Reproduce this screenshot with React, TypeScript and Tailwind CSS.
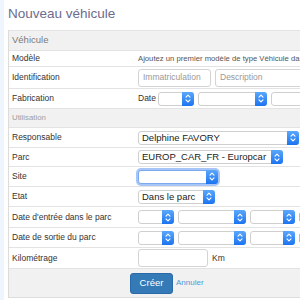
import React from 'react';

const FONT = { fontFamily: '"Liberation Sans", Arial, sans-serif' };

// Mac-style select with the blue up/down button on the right
const Select: React.FC<{ w: number; text?: string; focus?: boolean }> = ({ w, text, focus }) => (
  <div
    className={`flex h-[14px] shrink-0 items-stretch rounded-[3px] border bg-white ${
      focus ? 'border-[#7aa9f0] shadow-[0_0_0_2px_rgba(96,150,240,0.55)]' : 'border-[#cfcfcf]'
    }`}
    style={{ width: w }}
  >
    <div className="flex-1 overflow-hidden whitespace-nowrap pl-[3px] text-[9.5px] leading-[12px] text-[#222]">
      {text}
    </div>
    <div className="-my-px -mr-px flex w-[12px] items-center justify-center rounded-r-[3px] bg-gradient-to-b from-[#5aa7fb] to-[#1a73ef]">
      <svg width="6" height="9" viewBox="0 0 6 9" fill="none" stroke="white" strokeWidth="1.1" strokeLinecap="round" strokeLinejoin="round">
        <path d="M1 3.2 L3 1.2 L5 3.2" />
        <path d="M1 5.8 L3 7.8 L5 5.8" />
      </svg>
    </div>
  </div>
);

const Row: React.FC<{ label: string; h: number; children?: React.ReactNode }> = ({ label, h, children }) => (
  <div className="flex items-center border-t border-[#e3e3e3]" style={{ height: h }}>
    <div className="w-[126px] shrink-0 pl-[3px] text-[8.5px] text-[#333]">{label}</div>
    <div className="flex flex-1 items-center gap-[4px] pl-[3px]">{children}</div>
  </div>
);

const Section: React.FC<{ title: string; h: number; big?: boolean }> = ({ title, h, big }) => (
  <div
    className={`flex items-center border-t border-[#e3e3e3] bg-[#f1f1f1] pl-[3px] ${
      big ? 'text-[9.5px] text-[#7a7a7a]' : 'text-[7.8px] text-[#a0a0a0]'
    }`}
    style={{ height: h }}
  >
    {title}
  </div>
);

const DateSelects = () => (
  <>
    <Select w={36} />
    <Select w={68} />
    <Select w={45} />
    <div className="h-[8px] w-[4px] shrink-0 bg-[#b8bcc4]" />
  </>
);

export default function App() {
  return (
    <div className="h-[300px] w-[300px] overflow-hidden border-l-[4px] border-[#eef5fc] bg-white pl-[4px]" style={FONT}>
      <div className="flex h-[30px] items-start pt-[4px] text-[13.5px] font-light text-[#6c6c8e]">Nouveau véhicule</div>

      <div className="w-[320px] border-b border-l border-[#dcdcdc]">
        <Section title="Véhicule" h={20} big />
        <Row label="Modèle" h={16}>
          <span className="whitespace-nowrap text-[7.7px] text-[#555]">Ajoutez un premier modèle de type Véhicule da</span>
        </Row>
        <Row label="Identification" h={22}>
          <div className="flex h-[18px] w-[73px] shrink-0 items-center rounded-[3px] border border-[#d4d4d4] pl-[4px] text-[8.5px] text-[#999]">
            Immatriculation
          </div>
          <div className="flex h-[18px] w-[100px] shrink-0 items-center rounded-[3px] border border-[#d4d4d4] pl-[4px] text-[8.5px] text-[#999]">
            Description
          </div>
        </Row>
        <Row label="Fabrication" h={20}>
          <span className="-mr-[2px] text-[8.5px] text-[#333]">Date</span>
          <Select w={36} />
          <Select w={69} />
          <Select w={45} />
        </Row>
        <Section title="Utilisation" h={19} />
        <Row label="Responsable" h={20}>
          <Select w={161} text="Delphine FAVORY" />
        </Row>
        <Row label="Parc" h={19}>
          <Select w={145} text="EUROP_CAR_FR - Europcar" />
        </Row>
        <Row label="Site" h={20}>
          <Select w={80} focus />
        </Row>
        <Row label="Etat" h={20}>
          <Select w={77} text="Dans le parc" />
        </Row>
        <Row label="Date d'entrée dans le parc" h={21}>
          <DateSelects />
        </Row>
        <Row label="Date de sortie du parc" h={20}>
          <DateSelects />
        </Row>
        <Row label="Kilométrage" h={21}>
          <div className="h-[18px] w-[70px] shrink-0 rounded-[3px] border border-[#d4d4d4]" />
          <span className="text-[8.5px] text-[#333]">Km</span>
        </Row>
        <div className="flex h-[29px] items-center border-t border-[#e3e3e3] bg-[#f1f1f1] pl-[121px]">
          <button className="h-[21px] w-[43px] rounded-[3px] border border-[#2a6aa6] bg-[#337ab7] text-[9.5px] text-white">
            Créer
          </button>
          <span className="ml-[3px] text-[8px] text-[#4b9bd6]">Annuler</span>
        </div>
      </div>
    </div>
  );
}
